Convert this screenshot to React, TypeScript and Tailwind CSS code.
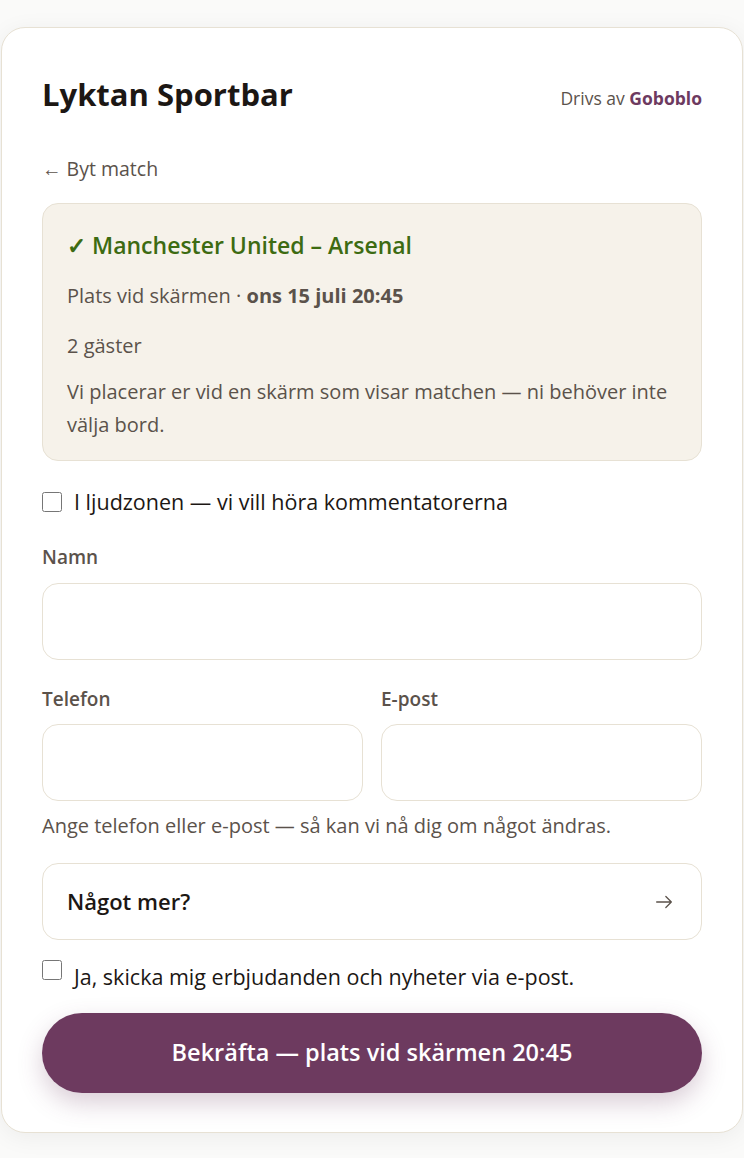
import React from "react";

const font = { fontFamily: '"Open Sans", "Noto Sans", sans-serif' };

function Field({ label, className = "", gap = "mb-[13px]" }: { label: string; className?: string; gap?: string }) {
  return (
    <label className={"flex flex-col " + className}>
      <span className={"text-[19px] font-semibold text-[#5b524b] leading-[26px] " + gap}>{label}</span>
      <input className="h-[77px] w-full rounded-[16px] border border-[#e7e1d4] bg-white px-5 outline-none" />
    </label>
  );
}

export default function App() {
  return (
    <div className="min-h-[1158px] w-full bg-[#fafaf9] pt-[27px]" style={font}>
      <div className="mx-auto w-[742px] rounded-[24px] border border-[#e7e1d4] bg-white px-10 pt-[44px] pb-[39px] shadow-[0_4px_24px_rgba(0,0,0,0.06)]">
        <div className="flex items-center justify-between">
          <h1 className="text-[31px] font-bold leading-[44px] text-[#1c1714]">Lyktan Sportbar</h1>
          <div className="text-[17.5px] text-[#5b524b] mt-2">
            Drivs av <span className="font-bold text-[#6d3a5f]">Goboblo</span>
          </div>
        </div>

        <div className="mt-[40px] text-[19.5px] leading-[26px] text-[#5b524b]">← Byt match</div>

        <div className="mt-[21px] rounded-[16px] border border-[#e7e1d4] bg-[#f6f2ea] px-6 pt-[25px] pb-[19px]">
          <div className="text-[23px] font-semibold leading-[32px] text-[#3d6b12]">✓ Manchester United – Arsenal</div>
          <div className="mt-[22px] text-[20px] leading-[26px] text-[#5b524b]">
            Plats vid skärmen · <span className="font-bold">ons 15 juli 20:45</span>
          </div>
          <div className="mt-[24px] text-[20px] leading-[26px] text-[#5b524b]">2 gäster</div>
          <div className="mt-[16px] text-[20px] leading-[33px] text-[#5b524b]">
            Vi placerar er vid en skärm som visar matchen — ni behöver inte välja bord.
          </div>
        </div>

        <label className="mt-[27px] flex items-center gap-3">
          <input type="checkbox" className="h-[20px] w-[20px] rounded border-[#767676] accent-[#6d3a5f]" />
          <span className="text-[21.5px] leading-[28px] text-[#1c1714]">I ljudzonen — vi vill höra kommentatorerna</span>
        </label>

        <Field label="Namn" className="mt-[28px]" />

        <div className="mt-[26px] grid grid-cols-2 gap-[18px]">
          <Field label="Telefon" gap="mb-[12px]" />
          <Field label="E-post" gap="mb-[12px]" />
        </div>

        <p className="mt-[12px] text-[20px] leading-[26px] text-[#5b524b]">
          Ange telefon eller e-post — så kan vi nå dig om något ändras.
        </p>

        <button className="mt-[24px] flex h-[77px] w-full items-center justify-between rounded-[16px] border border-[#e7e1d4] bg-white pl-6 pr-[26px] text-left">
          <span className="text-[22px] font-semibold text-[#1c1714]">Något mer?</span>
          <svg width="22" height="22" viewBox="0 0 24 24" fill="none" stroke="#5b524b" strokeWidth="1.4" strokeLinecap="round" strokeLinejoin="round">
            <path d="M4 12h16M14 6l6 6-6 6" />
          </svg>
        </button>

        <label className="mt-[19px] flex items-start gap-3">
          <input type="checkbox" className="mt-[1px] h-[20px] w-[20px] accent-[#6d3a5f]" />
          <span className="mt-[4px] text-[21.5px] leading-[28px] text-[#1c1714]">Ja, skicka mig erbjudanden och nyheter via e-post.</span>
        </label>

        <button className="mt-[22px] h-[80px] w-full rounded-full bg-[#6d3a5f] text-[23.5px] font-semibold text-white shadow-[0_10px_24px_rgba(109,58,95,0.25)]">
          Bekräfta — plats vid skärmen 20:45
        </button>
      </div>
    </div>
  );
}
